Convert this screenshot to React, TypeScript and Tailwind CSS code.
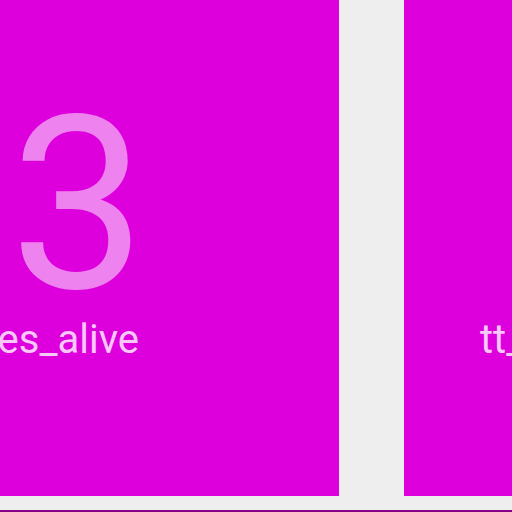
export default function App() {
  return (
    <div className="w-[512px] h-[512px] overflow-hidden bg-[#eeeeee] flex flex-col font-['Roboto',sans-serif]">
      <div className="h-[496px] flex gap-[65px] overflow-hidden shrink-0">
        <div className="w-[339px] shrink-0 bg-[#dd00dd] overflow-hidden">
          <div className="w-[146px] flex flex-col items-end pt-[90px]">
            <div className="h-[230px] text-[242px] leading-[230px] text-[#ee82ee] whitespace-nowrap">3</div>
            <div className="mr-[7px] text-[40px] leading-none text-[#f8c8f8] whitespace-nowrap">
              nb_zombies_alive
            </div>
          </div>
        </div>
        <div className="w-[400px] shrink-0 bg-[#dd00dd] overflow-hidden">
          <div className="pl-[76px] pt-[320px] text-[40px] leading-none text-[#f8c8f8] whitespace-nowrap">
            tt_zombies
          </div>
        </div>
      </div>
      <div className="h-[14px] shrink-0" />
      <div className="h-[2px] shrink-0 bg-[#880088]" />
    </div>
  );
}
